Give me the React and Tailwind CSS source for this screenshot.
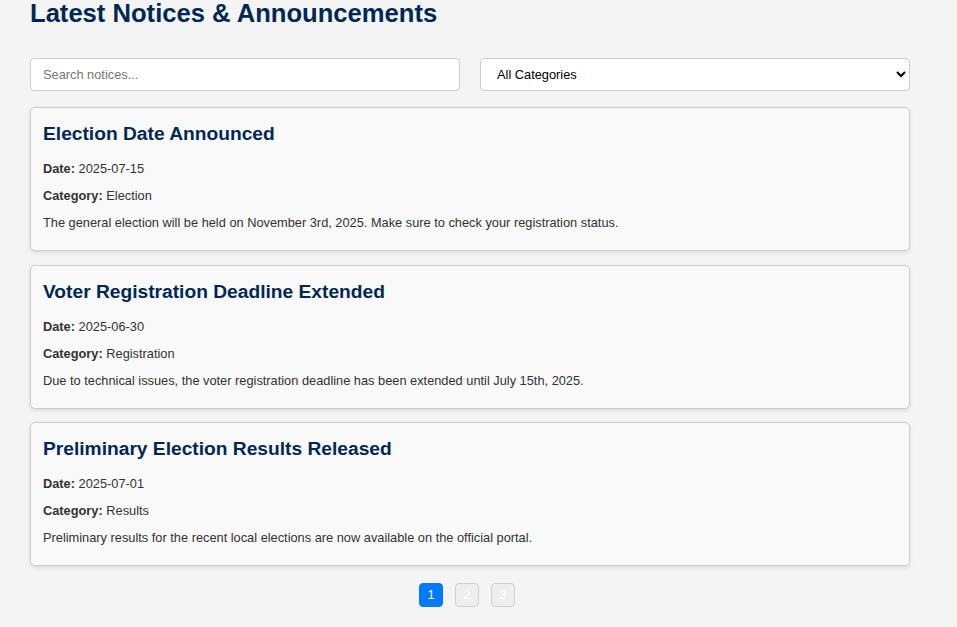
import React, { useState } from "react";

const NOTICES = [
  {
    id: 1,
    title: "Election Date Announced",
    date: "2025-07-15",
    category: "Election",
    body: "The general election will be held on November 3rd, 2025. Make sure to check your registration status.",
  },
  {
    id: 2,
    title: "Voter Registration Deadline Extended",
    date: "2025-06-30",
    category: "Registration",
    body: "Due to technical issues, the voter registration deadline has been extended until July 15th, 2025.",
  },
  {
    id: 3,
    title: "Preliminary Election Results Released",
    date: "2025-07-01",
    category: "Results",
    body: "Preliminary results for the recent local elections are now available on the official portal.",
  },
];

function NoticeCard({ notice }) {
  return (
    <article className="bg-[#f9f9f9] border border-[#cccccc] rounded-[5px] shadow-[0_2px_4px_rgba(0,0,0,0.1)] px-[12px] pt-[15px] pb-[20px]">
      <h3 className="text-[19.2px] leading-[22px] font-bold text-[#002855] mb-[16px]">{notice.title}</h3>
      <div className="flex flex-col gap-[12px] text-[12.8px] leading-[15px] text-[#333333]">
        <p>
          <strong>Date:</strong> {notice.date}
        </p>
        <p>
          <strong>Category:</strong> {notice.category}
        </p>
        <p>{notice.body}</p>
      </div>
    </article>
  );
}

export default function App() {
  const [page, setPage] = useState(1);
  const [query, setQuery] = useState("");

  return (
    <div className="min-h-screen bg-[#f4f4f4] font-['Liberation_Sans',Arial,sans-serif]">
      <div className="w-[880px] ml-[30px]">
        <h1 className="text-[25.6px] leading-[27px] font-bold text-[#002855]">Latest Notices &amp; Announcements</h1>

        <div className="mt-[31px] flex gap-[20px]">
          <input
            type="text"
            value={query}
            onChange={(e) => setQuery(e.target.value)}
            placeholder="Search notices..."
            className="w-[430px] h-[33px] px-[12px] bg-white border border-[#cccccc] rounded-[4px] text-[12.8px] text-black placeholder:text-[#757575] outline-none"
          />
          <select className="w-[430px] h-[33px] px-[12px] bg-white border border-[#cccccc] rounded-[4px] text-[12.8px] text-black outline-none">
            <option>All Categories</option>
            <option>Election</option>
            <option>Registration</option>
            <option>Results</option>
          </select>
        </div>

        <div className="mt-[16px] flex flex-col gap-[13.5px]">
          {NOTICES.map((notice) => (
            <NoticeCard key={notice.id} notice={notice} />
          ))}
        </div>

        <div className="mt-[17px] pr-[6px] flex justify-center gap-[12px] pb-[20px]">
          {[1, 2, 3].map((n) => (
            <button
              key={n}
              type="button"
              onClick={() => setPage(n)}
              className={`w-[24px] h-[24px] rounded-[4px] text-[12.8px] text-white flex items-center justify-center ${
                page === n ? "bg-[#007bff] border border-[#007bff]" : "bg-[#eeeeee] border border-[#d0d0d0]"
              }`}
            >
              {n}
            </button>
          ))}
        </div>
      </div>
    </div>
  );
}
